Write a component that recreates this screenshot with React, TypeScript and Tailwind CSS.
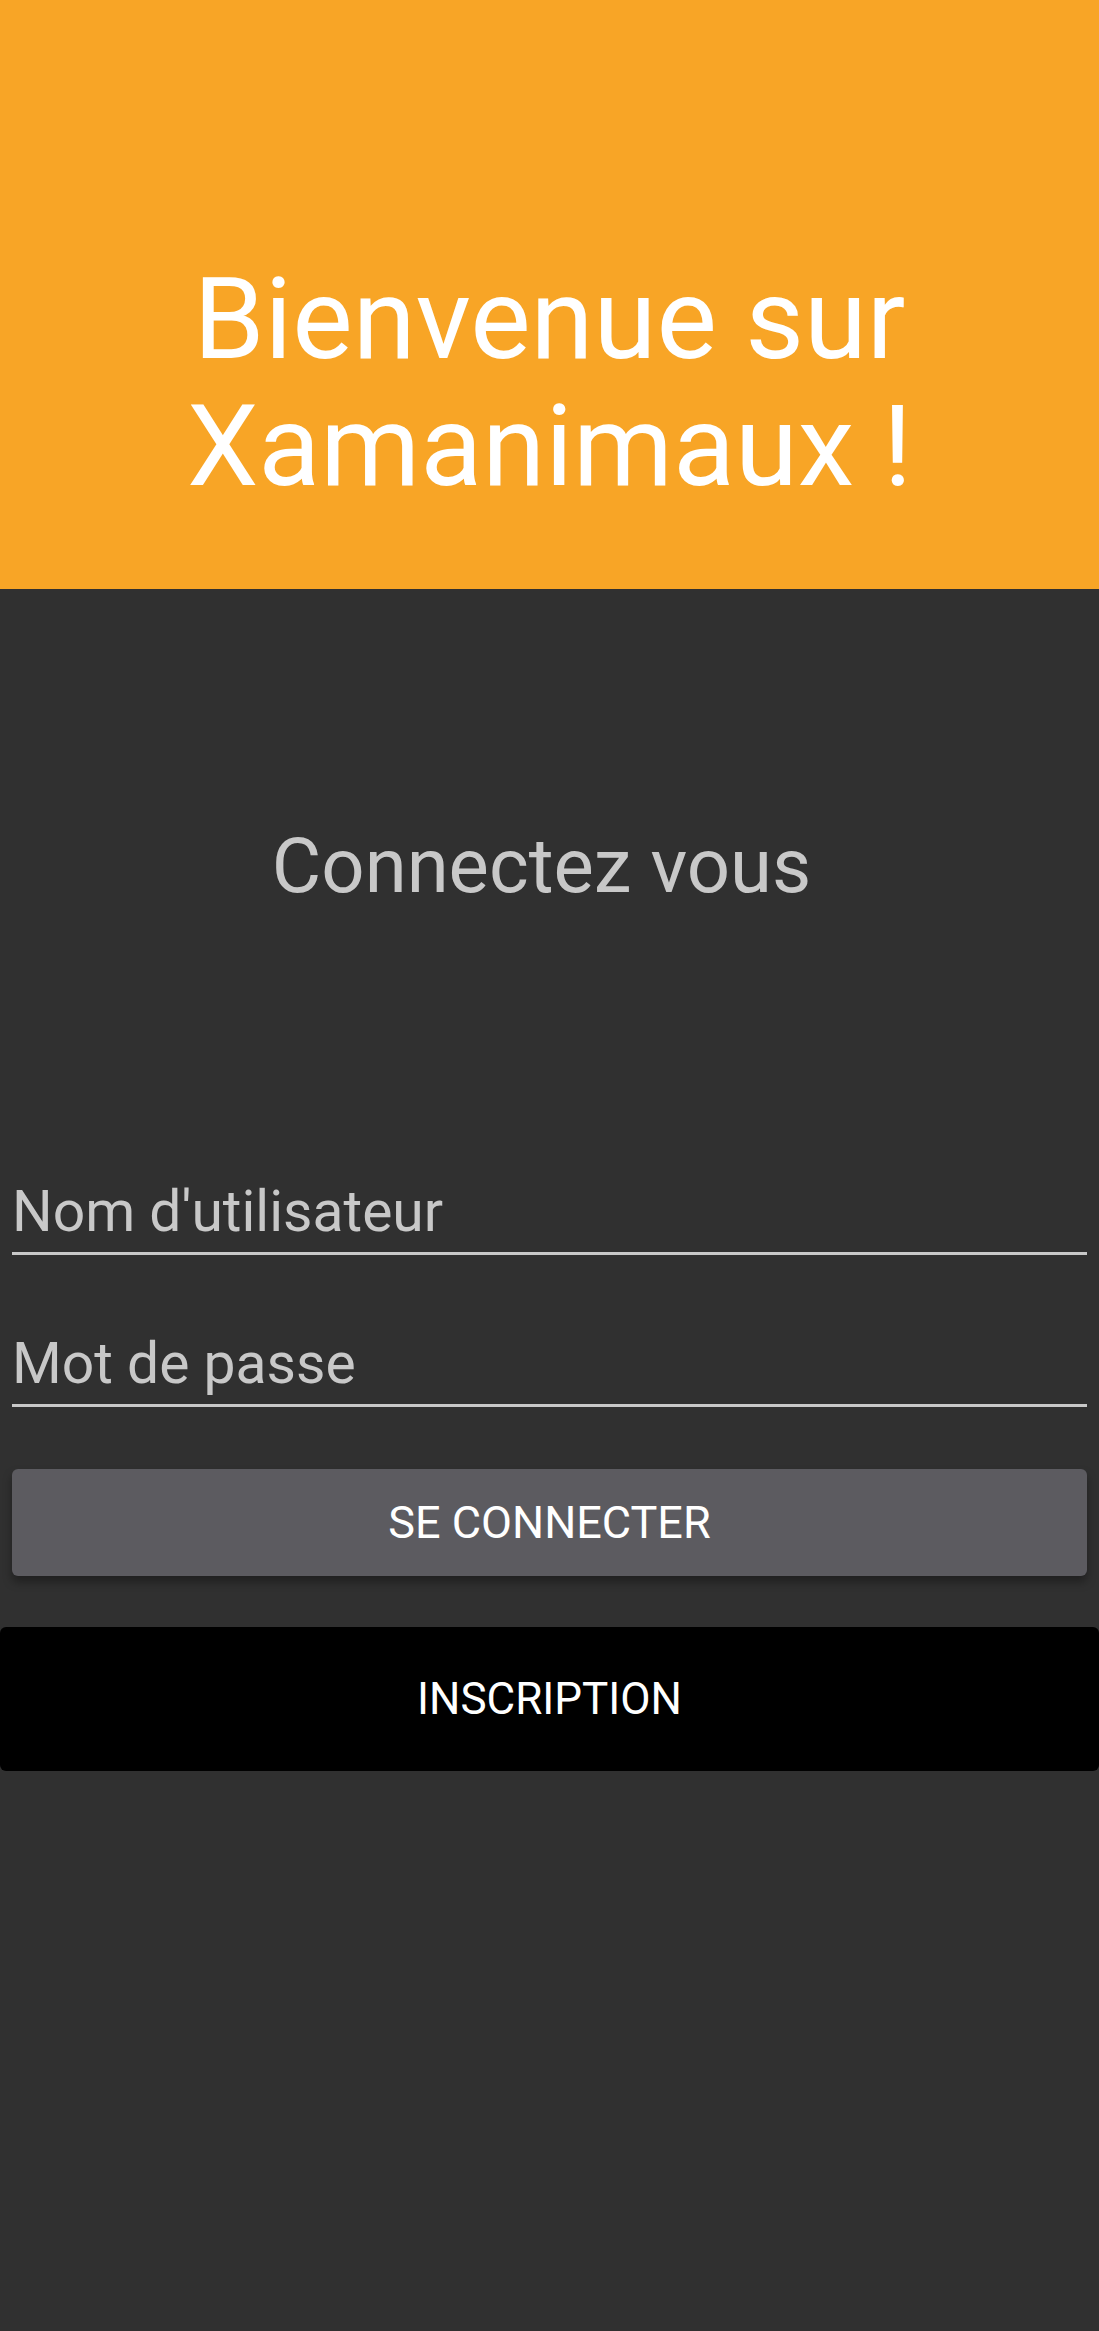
export default function App() {
  return (
    <div className="min-h-[2331px] bg-[#303030] font-['Roboto',sans-serif]">
      <header className="h-[589px] bg-[#f8a526] pt-[256px] text-center">
        <h1 className="text-[114px] leading-[127px] text-white font-normal">
          Bienvenue sur
          <br />
          Xamanimaux !
        </h1>
      </header>

      <div className="pt-[232px]">
        <h2 className="pr-[16px] text-center text-[76px] leading-[90px] text-[#c8c8c8]">Connectez vous</h2>

        <div className="mt-[267px] px-[12px]">
          <div className="border-b-[3px] border-[#c8c8c8] pb-[6px]">
            <div className="text-[57px] leading-[68px] text-[#c8c8c8]">Nom d'utilisateur</div>
          </div>
          <div className="mt-[75px] border-b-[3px] border-[#c8c8c8] pb-[6px]">
            <div className="text-[57px] leading-[68px] text-[#c8c8c8]">Mot de passe</div>
          </div>

          <button className="mt-[62px] w-full h-[107px] rounded-[6px] bg-[#5c5b60] text-white text-[45px] shadow-[0_6px_10px_rgba(0,0,0,0.35)]">
            SE CONNECTER
          </button>
        </div>

        <button className="mt-[51px] w-full h-[144px] rounded-[6px] bg-black text-white text-[44px]">
          INSCRIPTION
        </button>
      </div>
    </div>
  );
}
